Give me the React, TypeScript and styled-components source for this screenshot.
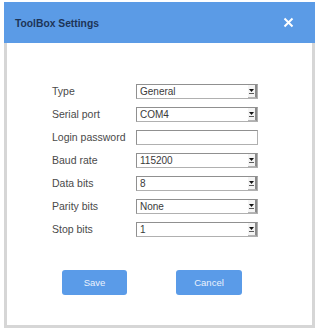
import { Fragment } from "react";
import styled, { createGlobalStyle } from "styled-components";

const GlobalStyle = createGlobalStyle`
  html, body {
    margin: 0;
    padding: 0;
    background: #ffffff;
  }
  body {
    font-family: "Liberation Sans", Arial, sans-serif;
  }
`;

const Dialog = styled.div`
  margin: 2px 0 0 4px;
  width: 311px;
  height: 326px;
  display: flex;
  flex-direction: column;
  box-sizing: border-box;
`;

const Header = styled.div`
  height: 41px;
  background: #5b9be6;
  display: flex;
  align-items: center;
  justify-content: space-between;
  padding: 0 21px 0 11px;
  flex-shrink: 0;
`;

const Title = styled.span`
  font-size: 10.3px;
  font-weight: 700;
  color: #1d3457;
  padding-top: 2px;
`;

const Close = styled.span`
  width: 11px;
  height: 11px;
  display: flex;
`;

const Body = styled.div`
  flex: 1;
  border: 3px solid #d6d6d6;
  border-top: none;
  background: #ffffff;
  padding: 41px 0 0 45px;
  display: flex;
  flex-direction: column;
`;

const Form = styled.div`
  display: grid;
  grid-template-columns: 84px 122px;
  row-gap: 8px;
  align-items: center;
`;

const Label = styled.span`
  font-size: 10.5px;
  color: #4a4a4a;
  line-height: 15px;
`;

const Field = styled.div`
  height: 15px;
  box-sizing: border-box;
  border: 1px solid #b0b0b0;
  border-top-color: #909090;
  border-left-color: #909090;
  background: #ffffff;
  display: flex;
  align-items: center;
  justify-content: space-between;
  padding-left: 3px;
`;

const Value = styled.span`
  font-size: 10px;
  color: #3a3a3a;
  line-height: 13px;
`;

const Arrow = styled.span`
  width: 9px;
  height: 13px;
  box-sizing: border-box;
  border-right: 2px solid #8a8a8a;
  border-bottom: 1px solid #b5b5b5;
  background: #f4f4f4;
  display: flex;
  align-items: center;
  justify-content: center;
`;

const Buttons = styled.div`
  display: flex;
  gap: 49px;
  margin: 33px 0 0 10px;
`;

const Button = styled.button<{ $w: number }>`
  width: ${(p) => p.$w}px;
  height: 25px;
  border: none;
  border-radius: 3px;
  background: #5a9be8;
  color: #eaf2fd;
  font-family: "Liberation Sans", Arial, sans-serif;
  font-size: 9.5px;
  padding: 0;
`;

const rows = [
  { label: "Type", value: "General", select: true },
  { label: "Serial port", value: "COM4", select: true },
  { label: "Login password", value: "", select: false },
  { label: "Baud rate", value: "115200", select: true },
  { label: "Data bits", value: "8", select: true },
  { label: "Parity bits", value: "None", select: true },
  { label: "Stop bits", value: "1", select: true },
];

export default function App() {
  return (
    <>
      <GlobalStyle />
      <Dialog>
        <Header>
          <Title>ToolBox Settings</Title>
          <Close>
            <svg width="11" height="11" viewBox="0 0 11 11">
              <path d="M1.5 1.5 L9.5 9.5 M9.5 1.5 L1.5 9.5" stroke="#ffffff" strokeWidth="2" />
            </svg>
          </Close>
        </Header>
        <Body>
          <Form>
            {rows.map((r) => (
              <Fragment key={r.label}>
                <Label>{r.label}</Label>
                <Field>
                  <Value>{r.value}</Value>
                  {r.select && (
                    <Arrow>
                      <svg width="5" height="6" viewBox="0 0 5 6">
                        <path d="M0 1 L5 1 L2.5 4 Z" fill="#111111" />
                        <path d="M0 5.5 L5 5.5" stroke="#333333" strokeWidth="0.8" />
                      </svg>
                    </Arrow>
                  )}
                </Field>
              </Fragment>
            ))}
          </Form>
          <Buttons>
            <Button $w={65}>Save</Button>
            <Button $w={66}>Cancel</Button>
          </Buttons>
        </Body>
      </Dialog>
    </>
  );
}
